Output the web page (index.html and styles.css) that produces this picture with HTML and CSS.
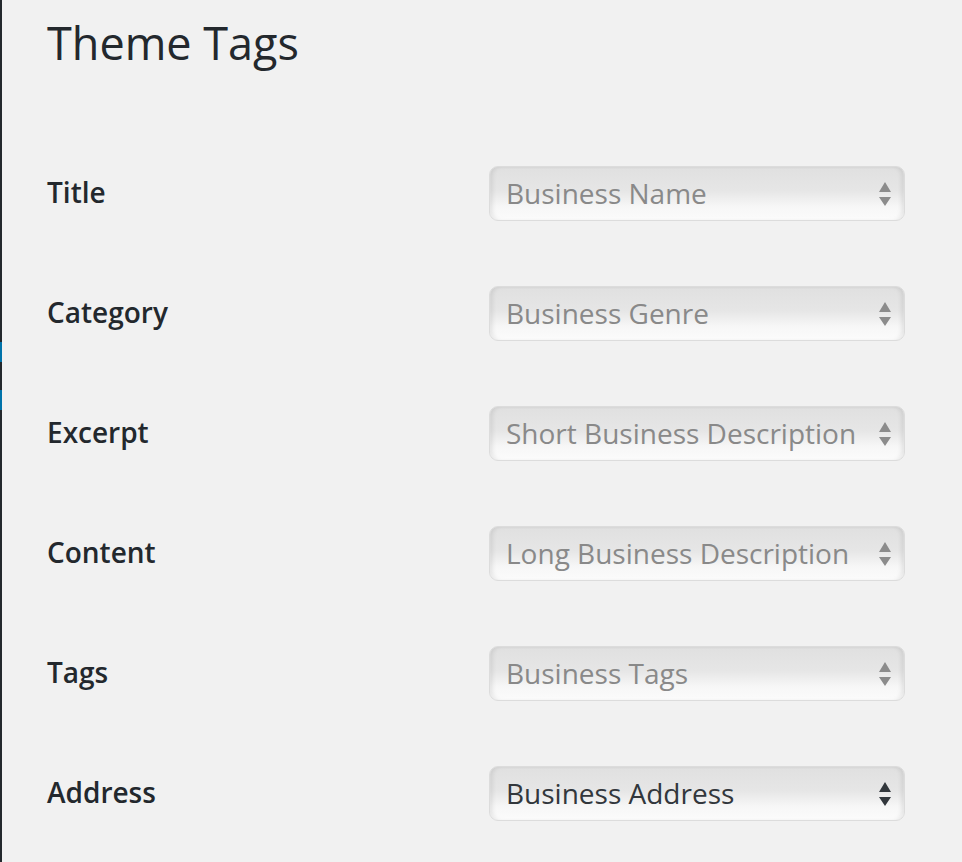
FILE: index.html
```html
<!DOCTYPE html>
<html>
<head>
<meta charset="utf-8">
<link rel="stylesheet" href="styles.css">
</head>
<body>
<div class="edge">
  <div class="edge-dark e1"></div>
  <div class="edge-blue b1"></div>
  <div class="edge-dark e2"></div>
  <div class="edge-blue b2"></div>
  <div class="edge-dark e3"></div>
</div>
<main class="wrap">
  <h1 class="title">Theme Tags</h1>
  <div class="row">
    <div class="label">Title</div>
    <div class="select disabled"><span class="val">Business Name</span><svg class="arrows" viewBox="0 0 12 24"><path d="M6 0 L12 10 L0 10 Z M0 15 L12 15 L6 24 Z"/></svg></div>
  </div>
  <div class="row">
    <div class="label">Category</div>
    <div class="select disabled"><span class="val">Business Genre</span><svg class="arrows" viewBox="0 0 12 24"><path d="M6 0 L12 10 L0 10 Z M0 15 L12 15 L6 24 Z"/></svg></div>
  </div>
  <div class="row">
    <div class="label">Excerpt</div>
    <div class="select disabled"><span class="val">Short Business Description</span><svg class="arrows" viewBox="0 0 12 24"><path d="M6 0 L12 10 L0 10 Z M0 15 L12 15 L6 24 Z"/></svg></div>
  </div>
  <div class="row">
    <div class="label">Content</div>
    <div class="select disabled"><span class="val">Long Business Description</span><svg class="arrows" viewBox="0 0 12 24"><path d="M6 0 L12 10 L0 10 Z M0 15 L12 15 L6 24 Z"/></svg></div>
  </div>
  <div class="row">
    <div class="label">Tags</div>
    <div class="select disabled"><span class="val">Business Tags</span><svg class="arrows" viewBox="0 0 12 24"><path d="M6 0 L12 10 L0 10 Z M0 15 L12 15 L6 24 Z"/></svg></div>
  </div>
  <div class="row">
    <div class="label">Address</div>
    <div class="select"><span class="val">Business Address</span><svg class="arrows" viewBox="0 0 12 24"><path d="M6 0 L12 10 L0 10 Z M0 15 L12 15 L6 24 Z"/></svg></div>
  </div>
</main>
</body>
</html>
```
FILE: styles.css
```css
html, body {
  margin: 0;
  padding: 0;
  height: 100%;
}
body {
  background: #f1f1f1;
  font-family: "Open Sans", "Noto Sans", sans-serif;
  color: #23282d;
  display: flex;
  overflow: hidden;
}
.edge {
  width: 2px;
  flex: 0 0 2px;
  display: flex;
  flex-direction: column;
  height: 862px;
}
.edge-dark { background: #23282d; }
.edge-blue { background: #0073aa; }
.e1 { height: 342px; }
.b1 { height: 20px; }
.e2 { height: 28px; }
.b2 { height: 20px; }
.e3 { flex: 1; }
.wrap {
  padding-left: 45px;
  flex: 1;
}
.title {
  margin: 0 0 93px 0;
  padding-top: 13px;
  font-size: 45px;
  line-height: 60px;
  font-weight: 400;
  color: #23282d;
}
.row {
  display: flex;
  align-items: center;
  height: 55px;
  margin-bottom: 65px;
}
.label {
  width: 442px;
  flex: 0 0 442px;
  font-size: 28px;
  font-weight: 600;
  line-height: 50px;
  padding-bottom: 4px;
}
.select {
  box-sizing: border-box;
  width: 416px;
  height: 55px;
  border: 1px solid #dcdcdc;
  border-radius: 9px;
  background: linear-gradient(#e0e0e0 0%, #e6e6e6 45%, #f7f7f7 75%, #fbfbfb 100%);
  box-shadow: inset 4px 0 5px -2px rgba(0,0,0,0.10), inset -4px 0 5px -2px rgba(0,0,0,0.10), inset 0 -2px 2px rgba(255,255,255,0.9);
  display: flex;
  align-items: center;
  justify-content: space-between;
  padding: 0 13px 0 16px;
  font-size: 28px;
  line-height: 50px;
  color: #32373c;
  white-space: nowrap;
}
.select .val {
  padding-bottom: 2px;
}
.select.disabled {
  color: #898989;
}
.arrows {
  width: 12px;
  height: 24px;
  flex: 0 0 12px;
  fill: #32373c;
}
.select.disabled .arrows {
  fill: #8c8c8c;
}
```
